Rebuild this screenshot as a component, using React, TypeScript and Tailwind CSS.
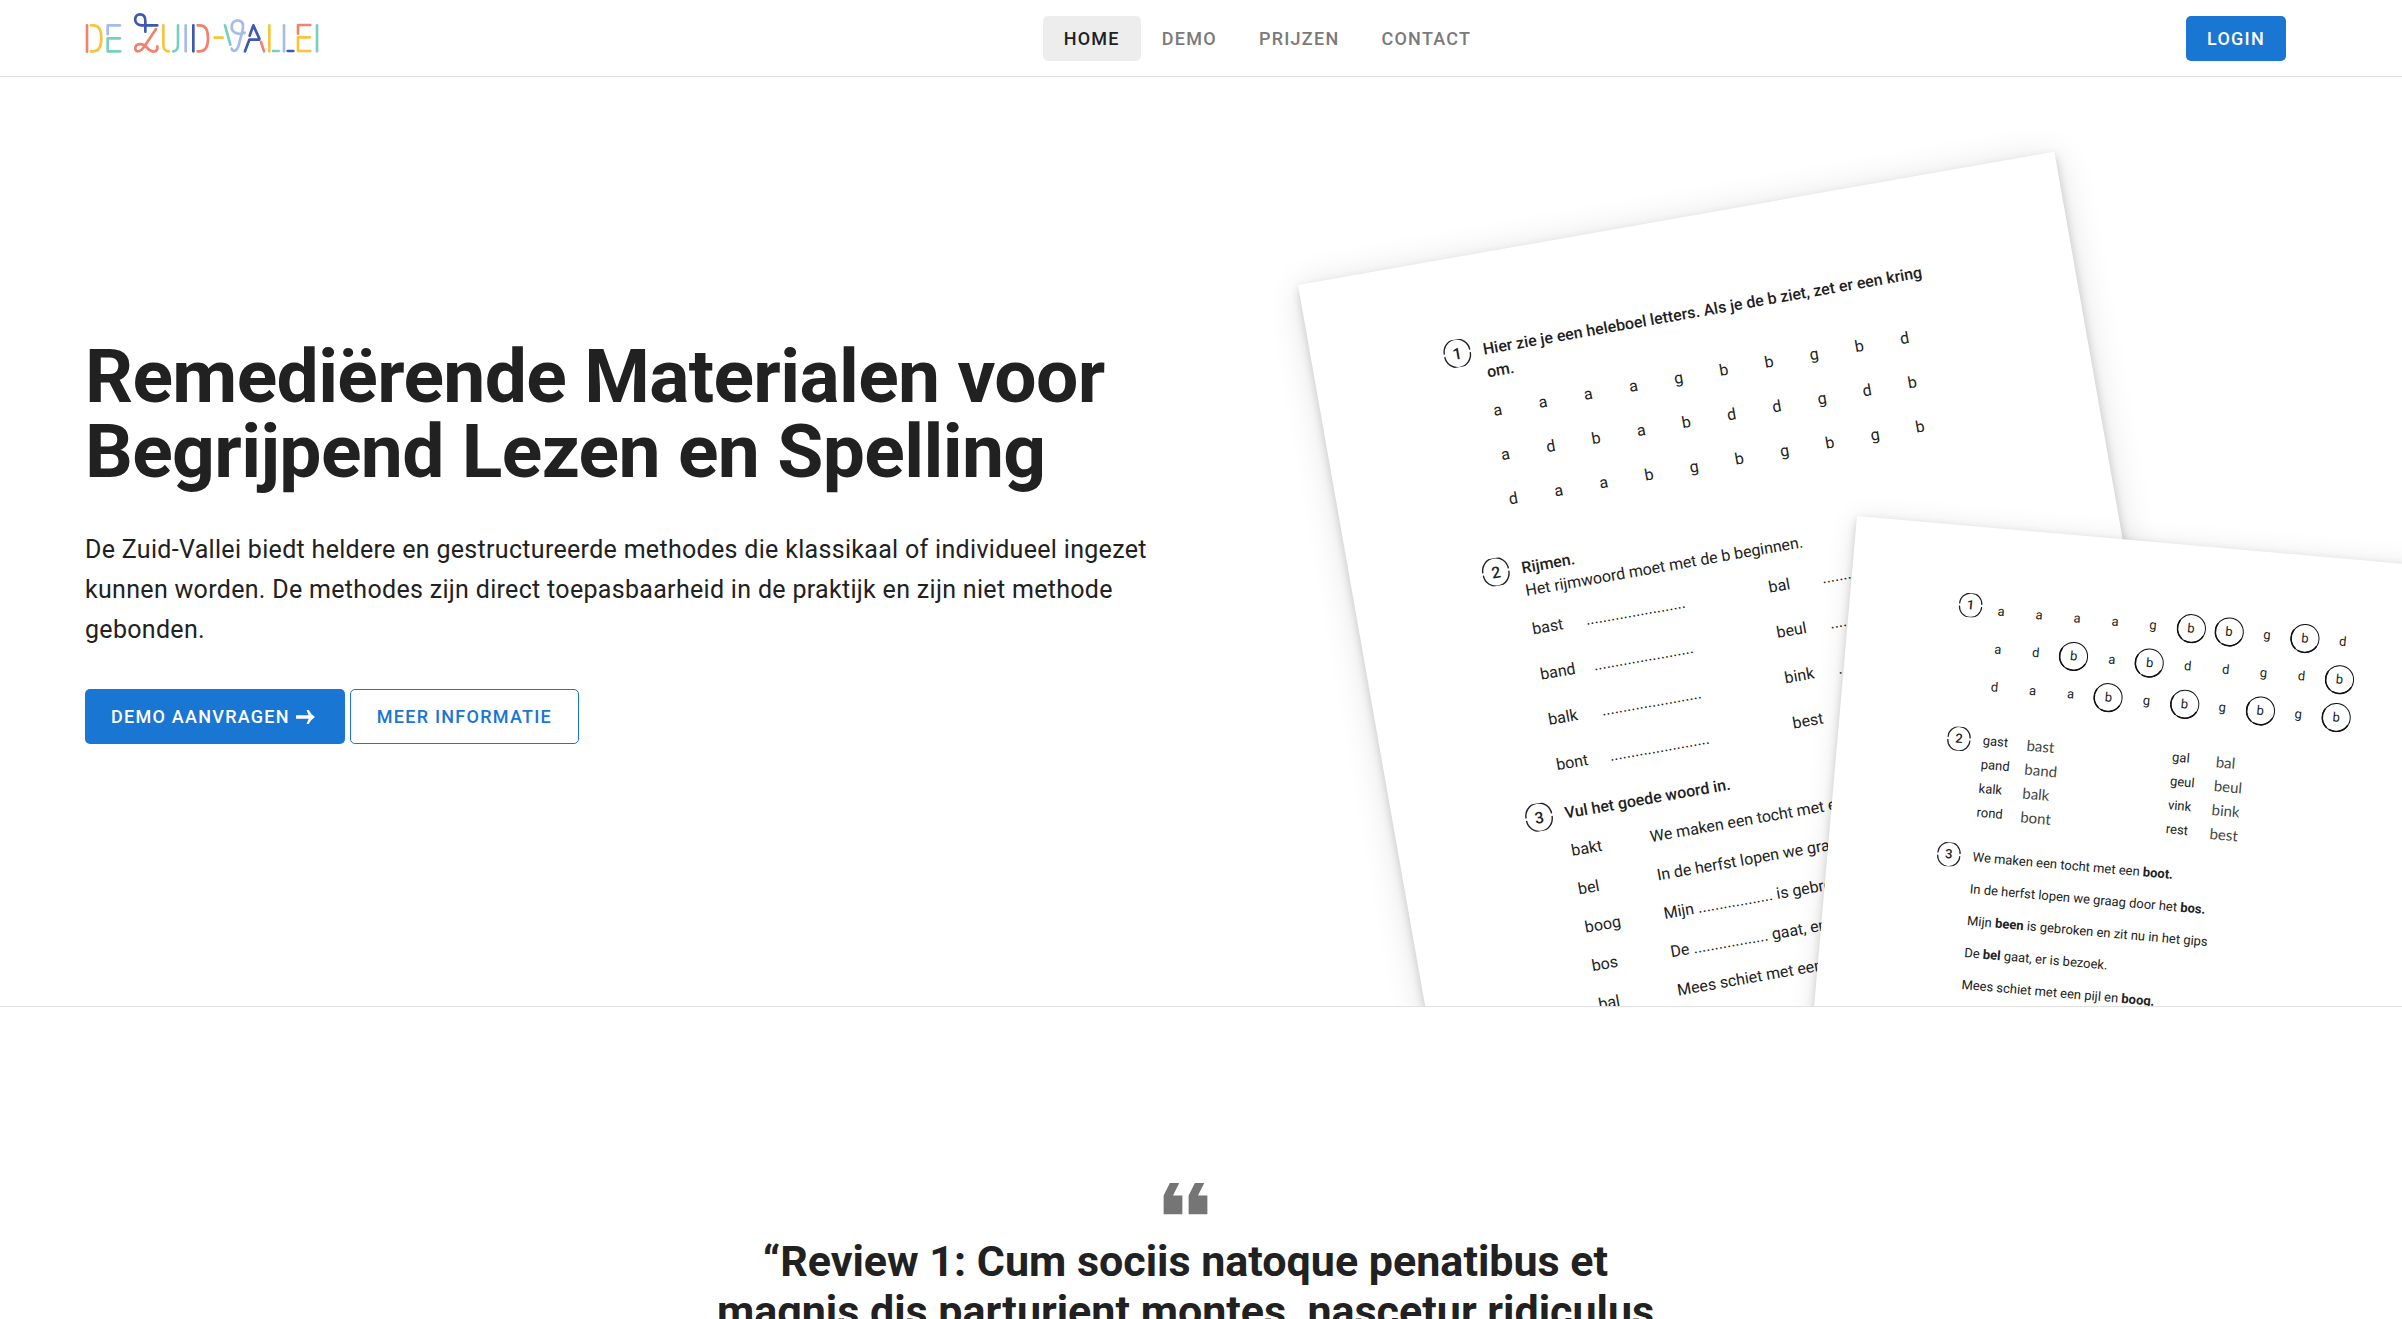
import { ReactNode } from "react";

const LETTERS = ["aaaagbbgbd", "adbabddgdb", "daabgbgbgb"];

function Logo() {
  const red = "#f2826d";
  const yellow = "#fac33c";
  const teal = "#78cfc0";
  const light = "#a5bbea";
  const blue = "#3c58b0";
  return (
    <svg viewBox="43 36 702 126" className="h-[42px] w-[234px]" fill="none" strokeWidth="8" strokeLinecap="round" strokeLinejoin="round" role="img" aria-label="De Zuid-Vallei">
      <path stroke={red} d="M49 76V155" />
      <path stroke={yellow} d="M61 76H68C86 76 92 92 92 115S86 154 68 154H61" />
      <path stroke={light} d="M148 76H111V103" />
      <path stroke={teal} d="M148 115H111V154H149" />
      <path stroke={blue} d="M260 76H212C187 74 189 43 208 43C221 43 224 52 224 62V95" />
      <path stroke={red} d="M256 87L222 138C208 160 191 157 194 142C199 128 218 130 229 143C243 160 262 158 260 139" />
      <path stroke={yellow} d="M278 76V132C278 146 283 154 294 154" />
      <path stroke={teal} d="M322 76V132C322 146 318 154 308 154" />
      <path stroke={light} d="M345 76V154" />
      <path stroke={blue} d="M368 76V154" />
      <path stroke={red} d="M381 76H388C407 76 412 92 412 115S407 154 388 154H381" />
      <path stroke={yellow} d="M432 113H456" />
      <path stroke={teal} d="M463 76L479 134" />
      <path stroke={light} d="M522 98C500 107 482 96 483 80C485 56 516 56 517 76C518 92 511 108 507 124C502 154 488 159 483 146" />
      <path stroke={blue} d="M537 107L548 76L566 116M523 154L536 119H566" />
      <path stroke={red} d="M571 126L580 154" />
      <path stroke={yellow} d="M596 76V154" />
      <path stroke={teal} d="M607 153H624" />
      <path stroke={light} d="M640 76V154" />
      <path stroke={blue} d="M651 153H668" />
      <path stroke={red} d="M719 75H682V101" />
      <path stroke={yellow} d="M718 112H682V153H719" />
      <path stroke={teal} d="M739 76V154" />
    </svg>
  );
}

function NumberBadge({ n, small }: { n: number; small?: boolean }) {
  return (
    <span className={small ? "relative mt-[3px] flex size-6 shrink-0 items-center justify-center text-[13px] font-medium" : "relative flex size-7 shrink-0 items-center justify-center text-[16px] font-medium"}>
      <svg viewBox="0 0 28 28" className="absolute inset-0 size-full" fill="none" stroke="#222" strokeWidth="1.4" aria-hidden="true">
        <path d="M1 13A13 13 0 0 1 27 12.500M1 15.500A13 13 0 0 0 27 15" />
      </svg>
      {n}
    </span>
  );
}

function Ring() {
  return (
    <svg viewBox="0 0 30 30" className="absolute size-[30px]" aria-hidden="true" fill="none" stroke="#111" strokeLinecap="round">
      <circle cx="15" cy="15" r="14" strokeWidth="1" />
      <path d="M3 7.800A14 14 0 0 0 6 25.700M9 27.600A14 14 0 0 0 27 22" strokeWidth="1.500" />
    </svg>
  );
}

function LetterGrid({ solved }: { solved?: boolean }) {
  return (
    <div className={solved ? "grid w-[381px] auto-rows-[38px] grid-cols-10" : "grid w-[459px] auto-rows-[45px] grid-cols-10"}>
      {LETTERS.flatMap((row, r) =>
        row.split("").map((letter, c) => (
          <span key={r + "-" + c} className="relative flex items-center justify-center">
            {letter}
            {solved && letter === "b" && <Ring />}
          </span>
        ))
      )}
    </div>
  );
}

function RhymeRow({ word, children }: { word: string; children?: ReactNode }) {
  return (
    <li className="flex">
      <span className="w-[54px]">{word}</span>
      <span>{children}</span>
    </li>
  );
}

const DOTS = "........................";

function WorkSheet() {
  return (
    <article className="absolute top-[208px] left-[97px] h-[1086px] w-[768px] origin-top-left -rotate-10 bg-white pt-[81px] pl-[131px] text-[16px] leading-[23px] shadow-[0_4px_10px_rgba(0,0,0,0.18),0_4px_36px_rgba(0,0,0,0.12)]">
      <section className="flex gap-3">
        <NumberBadge n={1} />
        <h2 className="mt-[3px] w-[450px] font-medium">Hier zie je een heleboel letters. Als je de b ziet, zet er een kring om.</h2>
      </section>
      <div className="mt-[5px] ml-[21px]">
        <LetterGrid />
      </div>
      <section className="mt-[33px] flex gap-3">
        <NumberBadge n={2} />
        <div className="mt-[3px]">
          <h2 className="font-medium">Rijmen.</h2>
          <p>Het rijmwoord moet met de b beginnen.</p>
          <div className="mt-[5px] flex leading-[46px]">
            <ul className="w-60">
              {["bast", "band", "balk", "bont"].map((w) => (
                <RhymeRow key={w} word={w}>{DOTS}</RhymeRow>
              ))}
            </ul>
            <ul>
              {["bal", "beul", "bink", "best"].map((w) => (
                <RhymeRow key={w} word={w}>{DOTS}</RhymeRow>
              ))}
            </ul>
          </div>
        </div>
      </section>
      <section className="mt-[11px] flex gap-3">
        <NumberBadge n={3} />
        <div className="mt-[3px]">
          <h2 className="font-medium">Vul het goede woord in.</h2>
          <div className="mt-[7px] flex leading-[39px]">
            <ul className="w-20">
              {["bakt", "bel", "boog", "bos", "bal"].map((w) => (
                <li key={w}>{w}</li>
              ))}
            </ul>
            <ul>
              <li>We maken een tocht met een ..................</li>
              <li>In de herfst lopen we graag door het ..................</li>
              <li>Mijn .................. is gebroken en zit nu in het gips</li>
              <li>De .................. gaat, er is bezoek.</li>
              <li>Mees schiet met een pijl en ..................</li>
            </ul>
          </div>
        </div>
      </section>
    </article>
  );
}

function AnswerSheet() {
  const left = [["gast", "bast"], ["pand", "band"], ["kalk", "balk"], ["rond", "bont"]];
  const right = [["gal", "bal"], ["geul", "beul"], ["vink", "bink"], ["rest", "best"]];
  return (
    <article className="absolute top-[439px] left-[656px] h-[900px] w-[640px] origin-top-left rotate-5 bg-white pt-[64px] pl-[109px] text-[13px] leading-6 shadow-[0_3px_8px_rgba(0,0,0,0.16),0_3px_28px_rgba(0,0,0,0.1)]">
      <section className="flex">
        <NumberBadge n={1} small />
        <LetterGrid solved />
      </section>
      <section className="mt-5 flex gap-3">
        <NumberBadge n={2} small />
        <div className="mt-[3px] flex">
          {[left, right].map((column, i) => (
            <ul key={i} className="w-[190px]">
              {column.map(([word, answer]) => (
                <li key={word} className="flex">
                  <span className="w-11">{word}</span>
                  <span className="font-['Lato'] text-[15px] text-[#444]">{answer}</span>
                </li>
              ))}
            </ul>
          ))}
        </div>
      </section>
      <section className="mt-[17px] flex gap-3">
        <NumberBadge n={3} small />
        <ul className="leading-8">
          <li>We maken een tocht met een <b>boot.</b></li>
          <li>In de herfst lopen we graag door het <b>bos.</b></li>
          <li>Mijn <b>been</b> is gebroken en zit nu in het gips</li>
          <li>De <b>bel</b> gaat, er is bezoek.</li>
          <li>Mees schiet met een pijl en <b>boog.</b></li>
        </ul>
      </section>
    </article>
  );
}

export default function App() {
  return (
    <div className="bg-white font-['Roboto',sans-serif] text-[#212121]">
      <header className="flex items-start justify-between border-b border-[#e0e0e0] pt-4 pr-[116px] pb-[15px] pl-[85px]">
        <a href="#" className="-mt-1 -mb-1 w-66">
          <Logo />
        </a>
        <nav className="flex text-[18px] leading-[45px] font-medium tracking-[0.07em] text-[#7a7a7a]">
          <a href="#" aria-current="page" className="rounded-[5px] bg-[#ededed] px-[21px] text-[#212121]">HOME</a>
          <a href="#" className="px-[21px]">DEMO</a>
          <a href="#" className="px-[21px]">PRIJZEN</a>
          <a href="#" className="px-[21px]">CONTACT</a>
        </nav>
        <button className="rounded-[5px] bg-[#1976d2] px-[21px] text-[18px] leading-[45px] font-medium tracking-[0.07em] text-white">LOGIN</button>
      </header>

      <main>
        <section className="relative grid min-h-[930px] grid-cols-2 overflow-hidden border-b border-[#e0e0e0]">
          <div className="self-center pr-10 pl-[85px]">
            <h1 className="text-[75px] leading-[75px] font-bold tracking-[-0.0083em]">Remediërende Materialen voor Begrijpend Lezen en Spelling</h1>
            <p className="mt-[41px] text-[25px] leading-10 tracking-[0.0125em]">
              De Zuid-Vallei biedt heldere en gestructureerde methodes die klassikaal of individueel ingezet kunnen worden. De methodes zijn direct toepasbaarheid in de praktijk en zijn niet methode gebonden.
            </p>
            <div className="mt-[39px] flex gap-[5px] text-[18px] font-medium tracking-[0.07em]">
              <button className="flex h-[55px] items-center gap-[6px] rounded-[5px] bg-[#1976d2] pr-[30px] pl-[26px] text-white">
                DEMO AANVRAGEN
                <svg viewBox="0 0 54 40" className="h-[14px] w-[19px]" fill="currentColor" aria-hidden="true">
                  <path d="M0 15H36L30 0H36Q43 13 54 20Q43 27 36 40H30L36 25H0Z" />
                </svg>
              </button>
              <button className="h-[55px] rounded-[5px] border border-[#1976d2] px-[26px] text-[#1976d2]">MEER INFORMATIE</button>
            </div>
          </div>
          <div className="relative">
            <WorkSheet />
            <AnswerSheet />
          </div>
        </section>

        <section className="flex flex-col items-center pt-[154px] pr-[31px] text-center">
          <svg viewBox="0 0 24 24" className="size-[75px]" fill="#757575" aria-hidden="true">
            <path d="M10 7L8 11H11V17H5V11L7 7H10M18 7L16 11H19V17H13V11L15 7H18Z" />
          </svg>
          <blockquote className="max-w-[990px] text-[43px] leading-[50px] font-bold">“Review 1: Cum sociis natoque penatibus et magnis dis parturient montes, nascetur ridiculus</blockquote>
        </section>
      </main>
    </div>
  );
}
